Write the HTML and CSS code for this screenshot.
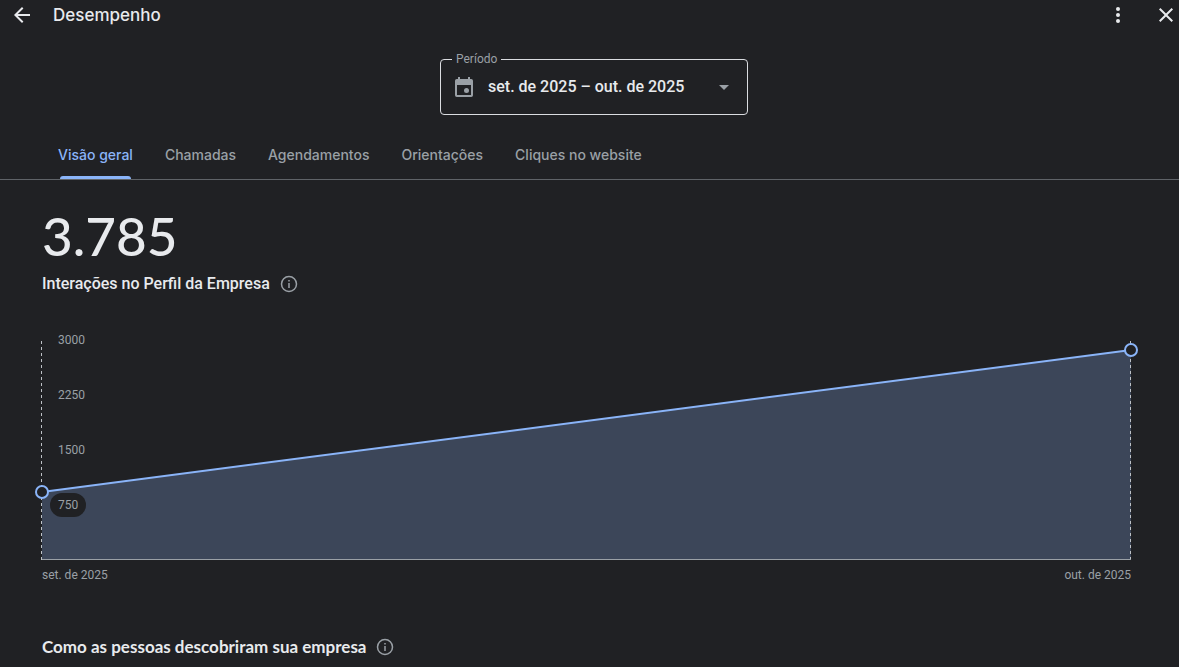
FILE: index.html
```html
<!DOCTYPE html>
<html lang="pt-BR">
<head>
<meta charset="utf-8">
<meta name="viewport" content="width=device-width, initial-scale=1">
<title>Desempenho</title>
<link rel="stylesheet" href="styles.css">
</head>
<body>
<header class="topbar">
  <button class="icon-button" type="button" aria-label="Voltar">
    <svg width="24" height="24" viewBox="0 0 24 24"><path fill="currentColor" d="M20 11H7.83l5.59-5.59L12 4l-8 8 8 8 1.41-1.41L7.83 13H20v-2z"/></svg>
  </button>
  <h1 class="title">Desempenho</h1>
  <button class="icon-button" type="button" aria-label="Mais opções">
    <svg width="24" height="24" viewBox="0 0 24 24"><g fill="currentColor"><circle cx="12" cy="6" r="2"/><circle cx="12" cy="12" r="2"/><circle cx="12" cy="18" r="2"/></g></svg>
  </button>
  <button class="icon-button" type="button" aria-label="Fechar">
    <svg width="24" height="24" viewBox="0 0 24 24"><path fill="currentColor" d="M19 6.41 17.59 5 12 10.59 6.41 5 5 6.41 10.59 12 5 17.59 6.41 19 12 13.41 17.59 19 19 17.59 13.41 12z"/></svg>
  </button>
</header>

<form class="filters">
  <fieldset class="period">
    <legend class="period-legend"><label for="period">Período</label></legend>
    <div class="period-row">
      <svg class="period-icon" width="24" height="24" viewBox="0 0 24 24"><path fill="currentColor" fill-rule="evenodd" d="M6 2h2v2h8V2h2v2h1.200a1.800 1.800 0 0 1 1.800 1.800v14.400a1.800 1.800 0 0 1-1.800 1.800H4.800A1.800 1.800 0 0 1 3 20.200V5.800A1.800 1.800 0 0 1 4.800 4H6zM5 10v10h14V10z"/><circle cx="14.500" cy="15.500" r="2.500" fill="currentColor"/></svg>
      <select class="period-select" id="period">
        <option>set. de 2025 – out. de 2025</option>
      </select>
      <svg class="period-arrow" width="24" height="24" viewBox="0 0 24 24"><path fill="currentColor" d="m7 10 5 5 5-5z"/></svg>
    </div>
  </fieldset>
</form>

<nav class="tabs" role="tablist">
  <button class="tab tab-active" type="button" role="tab" aria-selected="true">Visão geral</button>
  <button class="tab" type="button" role="tab" aria-selected="false">Chamadas</button>
  <button class="tab" type="button" role="tab" aria-selected="false">Agendamentos</button>
  <button class="tab" type="button" role="tab" aria-selected="false">Orientações</button>
  <button class="tab" type="button" role="tab" aria-selected="false">Cliques no website</button>
</nav>

<main class="content">
  <p class="total">3.785</p>
  <div class="caption">
    <h2 class="caption-text">Interações no Perfil da Empresa</h2>
    <button class="info" type="button" aria-label="Mais informações">
      <svg width="18" height="18" viewBox="0 0 18 18"><circle cx="9" cy="9" r="7.500" fill="none" stroke="currentColor" stroke-width="1.500"/><path fill="currentColor" d="M8.250 8h1.500v5h-1.500zM8.250 5h1.500v1.500h-1.500z"/></svg>
    </button>
  </div>

  <figure class="chart">
    <div class="plot">
      <svg class="graph" role="img" aria-label="Interações de set. de 2025 a out. de 2025">
        <svg width="100%" height="100%" viewBox="0 0 100 220" preserveAspectRatio="none"><path class="area" d="M0 152 100 10V220H0z"/></svg>
        <g class="guides" transform="translate(-1 0)">
          <line x1="0" y1="1" x2="0" y2="220"/>
          <line x1="100%" y1="1" x2="100%" y2="220"/>
        </g>
        <line class="axis" x1="0" y1="219.500" x2="100%" y2="219.500"/>
        <line class="series" x1="0" y1="152" x2="100%" y2="10"/>
        <circle class="point" cx="0" cy="152" r="6"/>
        <circle class="point" cx="100%" cy="10" r="6"/>
      </svg>
      <div class="scale">
        <span class="tick">3000</span>
        <span class="tick">2250</span>
        <span class="tick">1500</span>
        <span class="tick tick-filled">750</span>
      </div>
    </div>
    <figcaption class="dates"><span>set. de 2025</span><span>out. de 2025</span></figcaption>
  </figure>

  <div class="caption">
    <h2 class="section-title">Como as pessoas descobriram sua empresa</h2>
    <button class="info" type="button" aria-label="Mais informações">
      <svg width="18" height="18" viewBox="0 0 18 18"><circle cx="9" cy="9" r="7.500" fill="none" stroke="currentColor" stroke-width="1.500"/><path fill="currentColor" d="M8.250 8h1.500v5h-1.500zM8.250 5h1.500v1.500h-1.500z"/></svg>
    </button>
  </div>
</main>
</body>
</html>
```
FILE: styles.css
```css
* { box-sizing: border-box; }

body {
  margin: 0;
  background: #202124;
  color: #e8eaed;
  font-family: Roboto, "Liberation Sans", sans-serif;
}

button, select {
  border: 0;
  padding: 0;
  background: transparent;
  color: inherit;
  font: inherit;
  cursor: pointer;
}

svg { display: block; }
h1, h2, p, figure { margin: 0; }

.topbar {
  display: flex;
  align-items: center;
  height: 30px;
  padding: 0 1px 0 10px;
}

.icon-button { flex: none; }
.icon-button + .icon-button { margin-left: 24px; }

.title {
  flex: 1;
  padding-left: 19px;
  font: 500 17px/24px Inter, sans-serif;
}

.filters {
  display: flex;
  justify-content: center;
  padding: 22px 0 16px 9px;
}

.period {
  width: 308px;
  margin: 0;
  padding: 0 11px 6px;
  border: 1px solid #dadce0;
  border-radius: 4px;
}

.period-legend {
  padding: 0 4px;
  color: #9aa0a6;
  font-size: 12px;
  line-height: 14px;
}

.period-row {
  display: flex;
  align-items: center;
  height: 42px;
}

.period-icon, .period-arrow {
  flex: none;
  color: #9aa0a6;
}

.period-select {
  flex: 1;
  min-width: 0;
  margin-left: 12px;
  appearance: none;
  font-size: 16px;
  font-weight: 500;
  line-height: 24px;
}

.period-select option { background: #202124; }

.tabs {
  display: flex;
  height: 49px;
  padding-left: 42px;
  border-bottom: 1px solid #5f6368;
}

.tab {
  position: relative;
  padding: 0 16px;
  color: #9aa0a6;
  font: 500 14px/20px Inter, sans-serif;
}

.tab-active { color: #8ab4f8; }

.tab-active::after {
  content: "";
  position: absolute;
  right: 18px;
  bottom: 0;
  left: 18px;
  height: 3px;
  border-radius: 3px 3px 0 0;
  background: #8ab4f8;
}

.content { padding: 24px 48px 8px 42px; }

.total {
  font: 500 53px/64px Lato, sans-serif;
}

.caption {
  display: flex;
  align-items: center;
  gap: 10px;
  height: 32px;
}

.caption-text {
  font-size: 16px;
  font-weight: 500;
  line-height: 24px;
}

.info { color: #9aa0a6; }
.chart { margin: 40px 0 48px; }

.plot {
  display: grid;
  height: 220px;
}

.graph {
  grid-area: 1 / 1;
  width: 100%;
  height: 220px;
  overflow: visible;
}

.area { fill: #3c4659; }
.guides { stroke: #bdc1c6; stroke-dasharray: 3 3; shape-rendering: crispEdges; }
.axis { stroke: #9aa0a6; }
.series { stroke: #8ab4f8; stroke-width: 2; }
.point { fill: #202124; stroke: #8ab4f8; stroke-width: 2; }

.scale {
  grid-area: 1 / 1;
  display: flex;
  flex-direction: column;
  align-items: flex-start;
  gap: 31px;
  margin-top: -12px;
  padding-left: 8px;
  z-index: 1;
}

.tick {
  padding: 0 8px;
  border-radius: 12px;
  color: #9aa0a6;
  font-size: 12px;
  line-height: 24px;
}

.tick-filled { background: #202124; }

.dates {
  display: flex;
  justify-content: space-between;
  padding-top: 7px;
  color: #9aa0a6;
  font-size: 12px;
  line-height: 16px;
}

.section-title {
  font: 700 17px/24px Lato, sans-serif;
}
```
